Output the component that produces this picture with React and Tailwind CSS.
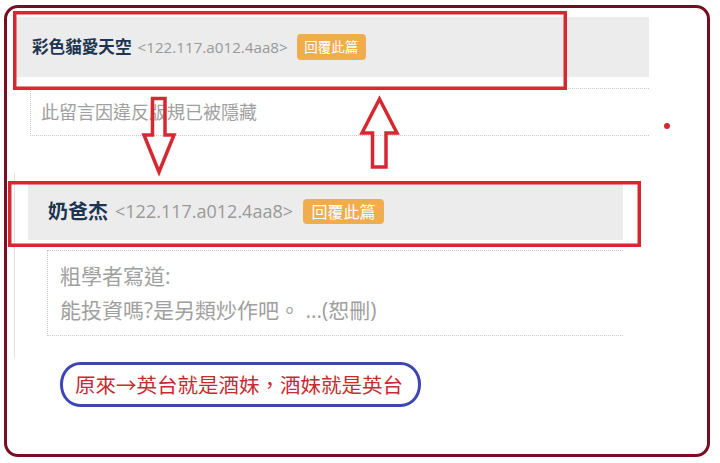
export default function App() {
  return (
    <div
      className="relative h-[463px] w-[720px] overflow-hidden bg-white pl-[4px] pt-[5px]"
      style={{ fontFamily: '"Open Sans", "Noto Sans CJK TC", sans-serif' }}
    >
      <div className="h-[452px] w-[706px] rounded-[14px] border-[3px] border-[#7a0c23]">
        {/* first comment */}
        <div className="ml-[8px] mt-[9px] flex h-[60px] w-[634px] items-center bg-[#ececec] pl-[17px]">
          <span className="text-[16.6px] font-bold text-[#1d3550]">彩色貓愛天空</span>
          <span className="ml-[6px] text-[15.2px] text-[#999]">&lt;122.117.a012.4aa8&gt;</span>
          <span className="ml-[9px] flex h-[26px] w-[69px] items-center justify-center rounded-[4px] bg-[#f0ad4e] text-[13.5px] text-white">
            回覆此篇
          </span>
        </div>
        <div className="ml-[23px] mt-[11px] flex h-[48px] w-[619px] items-center border-b border-l border-t border-dotted border-[#c8c8c8] pl-[10px]">
          <span className="text-[18px] text-[#a0a0a0]">此留言因違反版規已被隱藏</span>
        </div>

        {/* second comment */}
        <div className="ml-[7px] mt-[37px] h-[185px] border-l border-[#e2e2e2]">
          <div className="ml-[13px] pt-[10px]">
            <div className="flex h-[57px] w-[595px] items-center bg-[#ececec] pl-[20px]">
              <span className="text-[20px] font-bold text-[#1d3550]">奶爸杰</span>
              <span className="ml-[7px] text-[18px] text-[#999]">&lt;122.117.a012.4aa8&gt;</span>
              <span className="ml-[10px] flex h-[25px] w-[81px] items-center justify-center rounded-[4px] bg-[#f0ad4e] text-[16px] text-white">
                回覆此篇
              </span>
            </div>
          </div>
          <div className="ml-[32px] mt-[10px] flex h-[86px] w-[576px] flex-col justify-center border-b border-l border-t border-dotted border-[#c8c8c8] pl-[12px] text-[21px] leading-[34px] text-[#a0a0a0]">
            <span>粗學者寫道:</span>
            <span>能投資嗎?是另類炒作吧。 ...(恕刪)</span>
          </div>
        </div>

        {/* note */}
        <div className="ml-[53px] mt-[4px] flex h-[45px] w-[361px] items-center rounded-[20px/22px] border-[3px] border-[#3d46b4] pl-[12px]">
          <span
            className="text-[20.5px] text-[#c72a30]"
            style={{ fontFamily: '"Noto Sans CJK TC", serif' }}
          >
            原來→英台就是酒妹，酒妹就是英台
          </span>
        </div>
      </div>

      {/* annotation marks */}
      <svg
        className="pointer-events-none absolute left-0 top-0"
        width="720"
        height="463"
        viewBox="0 0 720 463"
      >
        <g fill="none" stroke="#d52831" strokeWidth="3.5" strokeLinejoin="miter">
          <rect x="14.75" y="12.75" width="550.5" height="75.5" />
          <rect x="9.75" y="182.75" width="629.5" height="62.5" />
          <polygon points="152.5,98.5 165,98.5 165,135 174,135 159,172 144,135 152.5,135" />
          <polygon points="379.5,99 397,133 386,133 386,167 372.5,167 372.5,133 362,133" />
        </g>
        <circle cx="667" cy="126" r="3" fill="#d52831" />
      </svg>
    </div>
  );
}
